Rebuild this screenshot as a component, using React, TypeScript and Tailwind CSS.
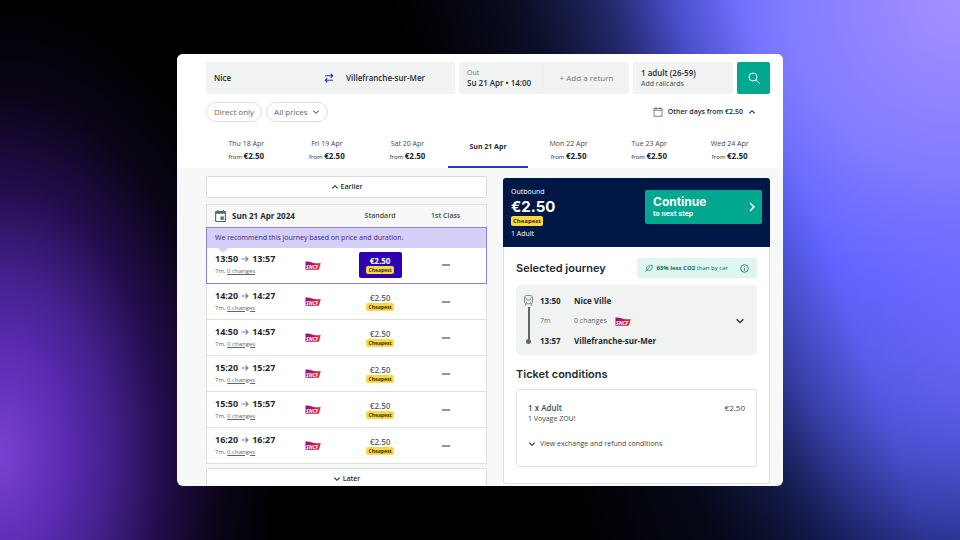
import { useId, useState } from "react";

type DayOption = {
  label: string;
  price: string;
};

type Journey = {
  departs: string;
  arrives: string;
  price: string;
};

const DAYS: DayOption[] = [
  { label: "Thu 18 Apr", price: "€2.50" },
  { label: "Fri 19 Apr", price: "€2.50" },
  { label: "Sat 20 Apr", price: "€2.50" },
  { label: "Sun 21 Apr", price: "€2.50" },
  { label: "Mon 22 Apr", price: "€2.50" },
  { label: "Tue 23 Apr", price: "€2.50" },
  { label: "Wed 24 Apr", price: "€2.50" },
];

const JOURNEYS: Journey[] = [
  { departs: "13:50", arrives: "13:57", price: "€2.50" },
  { departs: "14:20", arrives: "14:27", price: "€2.50" },
  { departs: "14:50", arrives: "14:57", price: "€2.50" },
  { departs: "15:20", arrives: "15:27", price: "€2.50" },
  { departs: "15:50", arrives: "15:57", price: "€2.50" },
  { departs: "16:20", arrives: "16:27", price: "€2.50" },
];

function Chevron({ direction, className = "" }: { direction: "up" | "down" | "right"; className?: string }) {
  const paths = { up: "M2 8l4-4 4 4", down: "M2 4l4 4 4-4", right: "M4 2l4 4-4 4" };
  return (
    <svg viewBox="0 0 12 12" fill="none" stroke="currentColor" strokeWidth="1.600" className={className} aria-hidden="true">
      <path d={paths[direction]} />
    </svg>
  );
}

function SncfLogo() {
  const id = useId();
  return (
    <svg viewBox="0 0 32 18" className="h-[9px] w-4" role="img" aria-label="SNCF">
      <defs>
        <linearGradient id={id} x1="0" x2="1">
          <stop offset="0" stopColor="#8a1a80" />
          <stop offset="0.5" stopColor="#c0175a" />
          <stop offset="1" stopColor="#ee2a24" />
        </linearGradient>
      </defs>
      <path d="M1 1c9-.8 14 3 21 3.500 4 .2 7-.5 9.500-.5l-3 11c-.5 2-2 2.500-4 2.500H1z" fill={`url(#${id})`} />
      <text x="2" y="15" fontSize="10" fontWeight="700" fontStyle="italic" fill="#fff" fontFamily="Open Sans, sans-serif">
        SNCF
      </text>
    </svg>
  );
}

function SearchBar() {
  const [from, setFrom] = useState("Nice");
  const [to, setTo] = useState("Villefranche-sur-Mer");

  const handleSwap = () => {
    setFrom(to);
    setTo(from);
  };

  return (
    <form className="grid h-8 grid-cols-[249fr_170fr_100fr_33px] gap-1" onSubmit={(event) => event.preventDefault()}>
      <div className="flex items-center rounded-[2px] bg-[#f1f3f3] px-2">
        <input
          aria-label="From"
          value={from}
          onChange={(event) => setFrom(event.target.value)}
          className="w-0 flex-1 text-[8px] font-semibold outline-none"
        />
        <button type="button" onClick={handleSwap} aria-label="Swap stations" className="mr-3 text-[#2f35c9]">
          <svg viewBox="0 0 20 20" fill="none" stroke="currentColor" strokeWidth="2.200" className="size-[10px]" aria-hidden="true">
            <path d="M2 5.500h15M13.500 1.500l4 4-4 4M18 14.500H3M6.500 10.500l-4 4 4 4" />
          </svg>
        </button>
        <input
          aria-label="To"
          value={to}
          onChange={(event) => setTo(event.target.value)}
          className="w-[101px] text-[8px] font-semibold outline-none"
        />
      </div>
      <div className="grid grid-cols-2 divide-x divide-[#eceeee] rounded-[2px] bg-[#f1f3f3]">
        <button type="button" className="flex flex-col items-start justify-center px-2 leading-[10px]">
          <span className="text-[7px] text-[#6b7577]">Out</span>
          <span className="text-[8px] font-semibold whitespace-nowrap">Su 21 Apr • 14:00</span>
        </button>
        <button type="button" className="text-[8px] text-[#6b7577]">+ Add a return</button>
      </div>
      <button type="button" className="flex flex-col items-start justify-center rounded-[2px] bg-[#f1f3f3] px-2 leading-[11px]">
        <span className="text-[8px] font-semibold whitespace-nowrap">1 adult (26-59)</span>
        <span className="text-[7px] text-[#3d494c]">Add railcards</span>
      </button>
      <button type="submit" aria-label="Search" className="flex items-center justify-center rounded-[2px] bg-[#00a88f] text-white">
        <svg viewBox="0 0 24 24" fill="none" stroke="currentColor" strokeWidth="2" className="size-3" aria-hidden="true">
          <circle cx="10" cy="10" r="8" />
          <path d="M16 16l7 7" />
        </svg>
      </button>
    </form>
  );
}

function Filters() {
  return (
    <div className="mt-2 flex items-center gap-1 text-[8px] text-[#5c6668]">
      <button type="button" className="h-5 rounded-full border border-[#dcdfe0] px-[7px]">Direct only</button>
      <button type="button" className="flex h-5 items-center gap-1 rounded-full border border-[#dcdfe0] px-[7px]">
        All prices
        <Chevron direction="down" className="size-2" />
      </button>
      <button type="button" className="mr-[14px] ml-auto flex items-center gap-[5px] text-[7px] font-semibold text-[#1e2a2d]">
        <svg viewBox="0 0 20 20" fill="none" stroke="#5c6668" strokeWidth="1.600" className="size-[10px]" aria-hidden="true">
          <path d="M2 3h16v15.500H2zM2 6.500h16M6 0v4M14 0v4" />
        </svg>
        Other days from €2.50
        <Chevron direction="up" className="size-2" />
      </button>
    </div>
  );
}

function DayTabs() {
  const [selected, setSelected] = useState("Sun 21 Apr");

  return (
    <nav className="mt-[10px] grid grid-cols-7" aria-label="Travel day">
      {DAYS.map(({ label, price }) => {
        const isSelected = label === selected;
        return (
          <button
            key={label}
            type="button"
            onClick={() => setSelected(label)}
            className={`flex h-9 flex-col items-center justify-center border-b-2 text-[7px] leading-3 ${isSelected ? "border-[#2f35c9] pb-1 font-bold" : "border-transparent pt-[2px]"}`}
          >
            <span className={isSelected ? "" : "text-[#3d494c]"}>{label}</span>
            {!isSelected && (
              <span className="text-[6px]">
                from <strong className="text-[8px] font-bold">{price}</strong>
              </span>
            )}
          </button>
        );
      })}
    </nav>
  );
}

function JourneyRow({ journey, isSelected, onSelect }: { journey: Journey; isSelected: boolean; onSelect: () => void }) {
  return (
    <tr className="h-9 bg-white">
      <td className="pl-2">
        <div className="flex items-center gap-[3px] text-[9px] leading-3 font-bold">
          {journey.departs}
          <svg viewBox="0 0 16 16" fill="none" stroke="#7d898b" strokeWidth="2.200" className="size-2" aria-hidden="true">
            <path d="M1 8h13M9 3l5 5-5 5" />
          </svg>
          {journey.arrives}
        </div>
        <div className="text-[6px] leading-3 text-[#5c6668]">
          7m, <a href="#changes" className="underline">0 changes</a>
        </div>
      </td>
      <td>
        <div className="flex justify-center"><SncfLogo /></div>
      </td>
      <td>
        <button
          type="button"
          onClick={onSelect}
          className={`mx-auto flex h-[26px] w-[43px] flex-col items-center justify-center rounded-[2px] text-[8px] leading-[10px] ${isSelected ? "bg-[#2d00b3] font-bold text-white" : "font-semibold text-[#5c6668]"}`}
        >
          {journey.price}
          <span className="rounded-[2px] bg-[#ffd93b] px-[2px] text-[5px] leading-[8px] font-bold text-[#2b2b3d]">Cheapest</span>
        </button>
      </td>
      <td className="pr-[14px]">
        <div className="mx-auto h-[2px] w-2 bg-[#8b9698]" />
      </td>
    </tr>
  );
}

function JourneyList() {
  const [selected, setSelected] = useState("13:50");
  const [recommended, ...others] = JOURNEYS;

  return (
    <div className="pt-2">
      <button type="button" className="flex h-[22px] w-full items-center justify-center gap-[2px] rounded-[2px] border border-[#d9dddd] bg-white text-[7px] font-semibold">
        <Chevron direction="up" className="size-2" />
        Earlier
      </button>
      <table className="mt-[6px] w-full table-fixed border-collapse border border-[#dde1e1]">
        <colgroup>
          <col className="w-[28%]" />
          <col className="w-[20%]" />
          <col className="w-[28%]" />
          <col className="w-[24%]" />
        </colgroup>
        <thead>
          <tr className="h-[23px] text-[7px] text-[#3d494c]">
            <th colSpan={2} className="pl-2 text-left text-[8px] font-bold text-[#1e2a2d]">
              <span className="flex items-center gap-[6px]">
                <svg viewBox="0 0 20 22" fill="#5c6668" className="h-3 w-[11px]" aria-hidden="true">
                  <path fillRule="evenodd" d="M2 2h2V0h2v2h8V0h2v2h2a2 2 0 0 1 2 2v16a2 2 0 0 1-2 2H2a2 2 0 0 1-2-2V4a2 2 0 0 1 2-2zM2 7v13h16V7z" />
                  <path d="M10 12h6v6h-6z" />
                </svg>
                Sun 21 Apr 2024
              </span>
            </th>
            <th className="font-semibold">Standard</th>
            <th className="pr-[14px] font-semibold">1st Class</th>
          </tr>
        </thead>
        <tbody className="border border-[#8f7de0]">
          <tr className="h-5 bg-[#d5cef7]">
            <td colSpan={4} className="relative pl-2 text-[7px] text-[#3b1c86]">
              We recommend this journey based on price and duration.
              <svg viewBox="0 0 10 5" fill="#d5cef7" className="absolute top-full left-[11px] h-[5px] w-[10px]" aria-hidden="true">
                <path d="M0 0h10L5 5z" />
              </svg>
            </td>
          </tr>
          <JourneyRow
            journey={recommended}
            isSelected={selected === recommended.departs}
            onSelect={() => setSelected(recommended.departs)}
          />
        </tbody>
        <tbody className="divide-y divide-[#dde1e1]">
          {others.map((journey) => (
            <JourneyRow
              key={journey.departs}
              journey={journey}
              isSelected={selected === journey.departs}
              onSelect={() => setSelected(journey.departs)}
            />
          ))}
        </tbody>
      </table>
      <button type="button" className="mt-1 flex h-[22px] w-full items-center justify-center gap-[2px] rounded-[2px] border border-[#d9dddd] bg-white text-[7px] font-semibold">
        <Chevron direction="down" className="size-2" />
        Later
      </button>
    </div>
  );
}

function SelectedJourney() {
  return (
    <div className="flex rounded bg-[#f1f3f3] pt-[10px] pr-3 pb-2 pl-2">
      <div className="flex w-[9px] flex-col items-center pb-[3px]">
        <svg viewBox="0 0 18 22" fill="none" stroke="#5c6668" strokeWidth="1.500" className="h-[11px] w-[9px]" aria-hidden="true">
          <path d="M5 1h8c2.500 0 4 2 4 5v8c0 2-1.500 3.500-3.500 3.500h-9C2.500 17.500 1 16 1 14V6c0-3 1.500-5 4-5zM3 5l3 5h6l3-5M4 14h2M12 14h2M4 18l-2 3.500M14 18l2 3.500" />
        </svg>
        <span className="mt-px w-[2px] flex-1 bg-[#5c6668]" />
        <span className="size-[5px] rounded-full bg-[#5c6668]" />
      </div>
      <div className="ml-[7px] grid flex-1 grid-cols-[34px_1fr] gap-y-[8px] text-[8px] leading-3 font-bold">
        <span>13:50</span>
        <span>Nice Ville</span>
        <span className="text-[7px] font-normal text-[#5c6668]">7m</span>
        <span className="flex items-center gap-2 text-[7px] font-normal text-[#5c6668]">
          0 changes
          <SncfLogo />
        </span>
        <span>13:57</span>
        <span>Villefranche-sur-Mer</span>
      </div>
      <button type="button" aria-label="Show journey details" className="self-center">
        <Chevron direction="down" className="size-[10px]" />
      </button>
    </div>
  );
}

function Basket() {
  return (
    <aside className="mt-[10px] self-start rounded-[3px] border border-[#dde1e1] bg-white">
      <div className="-m-px flex items-start justify-between rounded-t-[3px] bg-[#001845] p-2 text-white">
        <div className="flex flex-col items-start text-[7px] leading-[10px]">
          <span className="mt-px">Outbound</span>
          <strong className="my-px font-['Inter',sans-serif] text-[15px] leading-[17px] font-bold">€2.50</strong>
          <span className="rounded-[2px] bg-[#ffd93b] px-[2px] text-[6px] font-bold text-[#2b2b3d]">Cheapest</span>
          <span className="mt-[3px]">1 Adult</span>
        </div>
        <button type="button" className="mt-1 flex h-[34px] w-[117px] items-center justify-between rounded-[2px] bg-[#00a88f] pr-1 pl-2 text-left font-['Inter',sans-serif] font-bold">
          <span className="flex flex-col">
            <span className="text-[12px] leading-[13px]">Continue</span>
            <span className="text-[7px] leading-[11px]">to next step</span>
          </span>
          <Chevron direction="right" className="size-3" />
        </button>
      </div>
      <div className="px-3 pt-3 pb-4">
        <div className="flex items-center justify-between">
          <h2 className="font-['Inter',sans-serif] text-[11px] font-semibold whitespace-nowrap">Selected journey</h2>
          <div className="flex h-5 items-center rounded-[3px] bg-[#dff5ef] px-2 text-[6px] text-[#00745f]">
            <svg viewBox="0 0 20 20" fill="none" stroke="currentColor" strokeWidth="1.700" className="mr-[3px] size-2" aria-hidden="true">
              <path d="M1 19l4-4M12 7l-7 8M5 15c-3-5 0-11 13-12 1 8-2 14-9 13-2 0-3-.5-4-1z" />
            </svg>
            <span className="whitespace-nowrap"><strong className="font-bold">63% less CO2</strong> than by car</span>
            <svg viewBox="0 0 20 20" fill="none" stroke="currentColor" strokeWidth="1.700" className="ml-3 size-[9px]" aria-hidden="true">
              <circle cx="10" cy="10" r="8.500" />
              <path d="M10 9v6M10 5v2" />
            </svg>
          </div>
        </div>
        <div className="mt-[7px]"><SelectedJourney /></div>
        <h2 className="mt-[11px] font-['Inter',sans-serif] text-[11px] leading-4 font-semibold">Ticket conditions</h2>
        <div className="mt-[7px] rounded-[3px] border border-[#dde1e1] px-[11px] pt-3 pb-4 text-[7px] text-[#3d494c]">
          <div className="flex justify-between text-[8px] leading-3">
            <span className="font-semibold">1 x Adult</span>
            <span>€2.50</span>
          </div>
          <p className="leading-[10px]">1 Voyage ZOU!</p>
          <button type="button" className="mt-[14px] flex items-center gap-1 leading-3">
            <Chevron direction="down" className="size-2 text-[#1e2a2d]" />
            View exchange and refund conditions
          </button>
        </div>
      </div>
    </aside>
  );
}

export default function App() {
  return (
    <main className="flex h-screen bg-black bg-[radial-gradient(ellipse_29%_84%_at_0%_84%,#7842d0_0%,#5a2ab0_24%,#42208a_40%,#200c48_60%,#0a0416_80%,#00000000_100%),linear-gradient(71deg,#000000_50%,#000000cc_62%,#0000008c_69%,#00000033_75%,#00000000_81%),radial-gradient(ellipse_25%_45%_at_103%_62%,#8070ff90_0%,#8070ff00_100%),radial-gradient(ellipse_60%_108%_at_100%_0%,#a58fff_0%,#827cff_30%,#5a62ff_50%,#3d4bcc_74%,#1a2570_100%)] px-[177px] py-[54px] font-['Open_Sans','Noto_Sans',sans-serif] text-[#1e2a2d]">
      <section className="flex-1 overflow-hidden rounded-md bg-[#f7f9f9]">
        <header className="bg-white pt-2 pr-[13px] pl-[29px]">
          <SearchBar />
          <Filters />
          <DayTabs />
        </header>
        <div className="grid grid-cols-[281fr_267fr] gap-4 pr-[13px] pl-[29px]">
          <JourneyList />
          <Basket />
        </div>
      </section>
    </main>
  );
}
